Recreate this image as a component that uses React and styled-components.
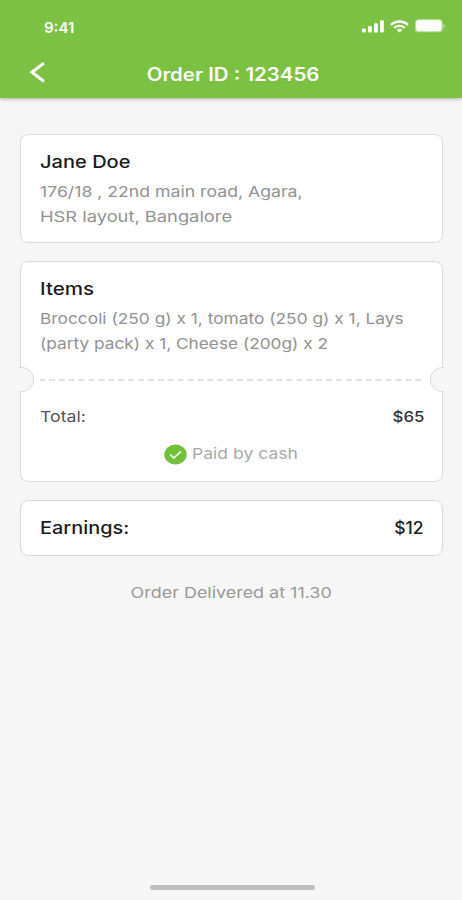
import styled, { createGlobalStyle } from 'styled-components'

const colors = {
  green: '#7bc242',
  page: '#f6f6f6',
  border: '#dadada',
  black: '#1c1c1c',
  grey: '#929292',
}

const GlobalStyle = createGlobalStyle`
  * {
    box-sizing: border-box;
  }
  body {
    margin: 0;
    background: ${colors.page};
    font-family: Inter, 'Liberation Sans', sans-serif;
  }
`

const Screen = styled.div`
  width: 462px;
  height: 900px;
  display: flex;
  flex-direction: column;
  background: ${colors.page};
  overflow: hidden;
`

const Header = styled.header`
  height: 98px;
  flex: none;
  background: ${colors.green};
  box-shadow: 0 1px 4px rgba(60, 50, 80, 0.4);
`

const StatusBar = styled.div`
  height: 52px;
  padding: 4px 16px 0 44px;
  display: flex;
  justify-content: space-between;
  align-items: center;
`

const StatusIcons = styled.div`
  display: flex;
  align-items: center;
  gap: 6px;
  margin-top: -4px;

  svg {
    display: block;
  }
`

const TitleBar = styled.div`
  height: 44px;
  padding: 0 28px;
  display: grid;
  grid-template-columns: 20px 1fr 20px;
  align-items: center;
`

const BackButton = styled.button`
  width: 20px;
  height: 24px;
  padding: 0;
  border: 0;
  background: none;
  margin-top: -4px;

  svg {
    display: block;
  }
`

const Title = styled.h1`
  margin: 2px 0 0 4px;
  display: flex;
  justify-content: center;
`

const Content = styled.main`
  flex: 1;
  padding: 36px 19px 0 20px;
  display: flex;
  flex-direction: column;
  gap: 18px;
`

const Card = styled.section`
  position: relative;
  height: ${(props) => props.$height}px;
  padding: ${(props) => props.$padding || '0 18px 0 19px'};
  background: #fff;
  border: 1.5px solid ${colors.border};
  border-radius: 8px;
`

const Row = styled.div`
  height: ${(props) => props.$height}px;
  display: flex;
  justify-content: ${(props) => props.$justify || 'space-between'};
  align-items: center;
`

const Text = styled.span`
  display: block;
  font-size: ${(props) => props.$size || 15}px;
  font-weight: ${(props) => props.$weight || 400};
  line-height: ${(props) => props.$line || 24}px;
  color: ${(props) => props.$color || colors.grey};
  white-space: pre;
  transform: scaleX(${(props) => props.$stretch || 1});
  transform-origin: ${(props) => props.$origin || 'left'} center;
`

const Divider = styled.svg`
  display: block;
  width: 382px;
  height: 2px;
  margin: 23px 0 22px;
`

// half circle cut out of the card edge
const Notch = styled.i`
  position: absolute;
  top: 105px;
  ${(props) => props.$side}: -2px;
  width: ${(props) => (props.$side === 'left' ? 15 : 14)}px;
  height: 25px;
  background: ${colors.page};
  border: 1.5px solid ${colors.border};
  border-${(props) => props.$side}: 0;
  border-radius: ${(props) => (props.$side === 'left' ? '0 13px 13px 0' : '13px 0 0 13px')};
`

const Paid = styled.div`
  height: 30px;
  margin-top: 9px;
  padding-left: 124px;
  display: flex;
  align-items: center;
  gap: 5px;
`

const HomeIndicator = styled.div`
  width: 165px;
  height: 5px;
  margin: 0 auto 10px;
  border-radius: 3px;
  background: #bebebe;
  transform: translateX(1px);
`

const SignalIcon = () => (
  <svg width="22" height="13" viewBox="0 0 22 13" fill="#fff">
    <rect x="0" y="8.5" width="3.8" height="4" rx="1" />
    <rect x="6" y="6" width="3.8" height="6.5" rx="1" />
    <rect x="12" y="3.2" width="3.8" height="9.3" rx="1" />
    <rect x="18" y="0.3" width="3.8" height="12.2" rx="1" />
  </svg>
)

const WifiIcon = () => (
  <svg width="19" height="13" viewBox="0 0 19 13" fill="none" stroke="#fff" strokeWidth="2.3">
    <path d="M1 4.8C5.8 0.4 13.2 0.4 18 4.8" />
    <path d="M4.2 8C7.3 5.2 11.7 5.2 14.8 8" />
    <path d="M6.7 9.9C8.3 8.5 10.7 8.5 12.3 9.9L9.5 12.6Z" fill="#fff" stroke="none" />
  </svg>
)

const BatteryIcon = () => (
  <svg width="31" height="14" viewBox="0 0 31 14">
    <rect x="0.6" y="0.8" width="26.5" height="12" rx="3" fill="#fff" stroke="#b9dd9b" strokeWidth="1.1" />
    <path d="M28.6 5V9C30.2 8.3 30.2 5.7 28.6 5Z" fill="#d6ecc5" />
  </svg>
)

const CheckIcon = () => (
  <svg width="23" height="21" viewBox="0 0 23 21">
    <ellipse cx="11.5" cy="10.5" rx="11.2" ry="10" fill="#72c13c" />
    <path d="M6.5 10.8L9.8 14L16.5 7.8" fill="none" stroke="#fff" strokeWidth="1.6" strokeLinecap="round" />
  </svg>
)

const App = () => {
  return (
    <>
      <GlobalStyle />
      <Screen>
        <Header>
          <StatusBar>
            <Text $size={15} $weight={600} $color="#fff">9:41</Text>
            <StatusIcons>
              <SignalIcon />
              <WifiIcon />
              <BatteryIcon />
            </StatusIcons>
          </StatusBar>
          <TitleBar>
            <BackButton aria-label="Back">
              <svg width="20" height="24" viewBox="0 0 20 24" fill="none" stroke="#fff" strokeWidth="3">
                <path d="M16 3L4 12.3L16 21.5" />
              </svg>
            </BackButton>
            <Title>
              <Text $size={18} $weight={600} $color="#fff" $stretch={1.135} $origin="center">Order ID : 123456</Text>
            </Title>
          </TitleBar>
        </Header>
        <Content>
          <Card $height={109} $padding="15px 19px 0">
            <Text $size={17} $weight={500} $color={colors.black} $stretch={1.18}>Jane Doe</Text>
            <Row $height={6} />
            <Text $stretch={1.177}>176/18 , 22nd main road, Agara,</Text>
            <Text $line={26} $stretch={1.22}>HSR layout, Bangalore</Text>
          </Card>
          <Card $height={221} $padding="15px 18px 0 19px">
            <Notch $side="left" />
            <Notch $side="right" />
            <Text $size={17} $weight={500} $color={colors.black} $stretch={1.21}>Items</Text>
            <Row $height={6} />
            <Text $stretch={1.155}>Broccoli (250 g) x 1, tomato (250 g) x 1, Lays</Text>
            <Text $line={25} $stretch={1.15}>(party pack) x 1, Cheese (200g) x 2</Text>
            <Divider viewBox="0 0 382 2">
              <line x1="-1" y1="1" x2="381" y2="1" stroke="#d8d8d8" strokeWidth="1.5" strokeDasharray="6 3.9" />
            </Divider>
            <Row $height={27}>
              <Text $weight={400} $color="#555" $stretch={1.18}>Total:</Text>
              <Text $weight={500} $color="#333" $stretch={1.12} $origin="right">$65</Text>
            </Row>
            <Paid>
              <CheckIcon />
              <Text $color="#aaa" $stretch={1.17}>Paid by cash</Text>
            </Paid>
          </Card>
          <Card $height={56}>
            <Row $height={53}>
              <Text $size={17} $weight={500} $color={colors.black} $stretch={1.17}>Earnings:</Text>
              <Text $size={17} $weight={500} $color={colors.black} $stretch={1.03} $origin="right">$12</Text>
            </Row>
          </Card>
          <Row $height={38} $justify="center">
            <Text $color="#999" $stretch={1.195} $origin="center">Order Delivered at 11.30</Text>
          </Row>
        </Content>
        <HomeIndicator />
      </Screen>
    </>
  )
}

export default App
